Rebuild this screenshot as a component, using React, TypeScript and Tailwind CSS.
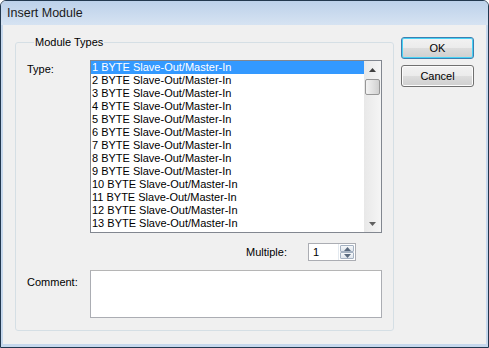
const items = Array.from({ length: 14 }, (_, i) => `${i + 1} BYTE Slave-Out/Master-In`);

const Arrow = ({ up, color = "#404040" }: { up?: boolean; color?: string }) => (
  <svg width="7" height="4" viewBox="0 0 7 4">
    <path d={up ? "M0 4 L3.5 0 L7 4 Z" : "M0 0 L7 0 L3.5 4 Z"} fill={color} />
  </svg>
);

const Button = ({ label, isDefault }: { label: string; isDefault?: boolean }) => (
  <div
    className={`flex h-[22px] w-[73px] items-center justify-center rounded-[3px] border ${
      isDefault ? "border-[#3c7fb1] shadow-[inset_0_0_0_1px_#48d2f5]" : "border-[#707070] shadow-[inset_0_0_0_1px_#fcfcfc]"
    } bg-[linear-gradient(to_bottom,#f2f2f2_0%,#ebebeb_50%,#dddddd_51%,#cfcfcf_100%)] text-black`}
  >
    {label}
  </div>
);

export default function App() {
  return (
    <div className="flex h-[348px] w-[489px] flex-col overflow-hidden rounded-t-[6px] border border-[#22384f] bg-[#f0f0f0] font-['Liberation_Sans',Arial,sans-serif] text-[11px] leading-[13px] text-black">
      <div className="flex h-[24px] shrink-0 items-center bg-[linear-gradient(to_bottom,#bcd1ea,#d6e3f2)] pl-[6px] text-[12.5px] text-[#1a1a1a]">
        Insert Module
      </div>
      <div className="flex flex-1 border-x-2 border-b-[3px] border-[#c6d8ed] pl-[12px]">
        <fieldset className="mt-[10px] h-[296px] w-[378px] rounded-[3px] border border-[#d5dfe5] px-[11px] pt-[11px]">
          <legend className="ml-[7px] px-[1px] leading-[14px]">Module Types</legend>
          <div className="flex">
            <div className="w-[63px] pt-[3px]">Type:</div>
            <div className="flex h-[173px] w-[292px] border border-[#828790] bg-white">
              <div className="flex-1 overflow-hidden">
                {items.map((t, i) => (
                  <div
                    key={t}
                    className={`h-[13px] pl-[1px] leading-[13px] whitespace-nowrap ${i === 0 ? "bg-[#3399ff] text-white" : ""}`}
                  >
                    {t}
                  </div>
                ))}
              </div>
              <div className="flex w-[17px] flex-col bg-[linear-gradient(to_right,#e8e8e8,#f5f5f5)]">
                <div className="flex h-[17px] items-center justify-center">
                  <Arrow up />
                </div>
                <div className="mx-[1px] mt-[1px] h-[16px] rounded-[2px] border border-[#979797] bg-[linear-gradient(to_right,#f3f3f3,#e2e2e2_50%,#d0d0d0)]" />
                <div className="flex-1" />
                <div className="flex h-[17px] items-center justify-center">
                  <Arrow color="#606060" />
                </div>
              </div>
            </div>
          </div>
          <div className="mt-[10px] flex items-center">
            <div className="ml-[219px] w-[62px]">Multiple:</div>
            <div className="flex h-[18px] w-[48px] border border-[#abadb3] bg-white">
              <div className="flex-1 pl-[4px] pt-[2px]">1</div>
              <div className="flex w-[17px] flex-col border-l border-[#e3e9ef] p-[1px]">
                <div className="flex flex-1 items-center justify-center rounded-[1px] border border-[#a5b2c2] bg-[linear-gradient(to_bottom,#f6f8fa,#dfe5ec)]">
                  <Arrow up color="#5a6a7e" />
                </div>
                <div className="flex flex-1 items-center justify-center rounded-[1px] border border-[#a5b2c2] bg-[linear-gradient(to_bottom,#f6f8fa,#dfe5ec)]">
                  <Arrow color="#5a6a7e" />
                </div>
              </div>
            </div>
          </div>
          <div className="mt-[9px] flex">
            <div className="w-[63px] pt-[6px]">Comment:</div>
            <div className="h-[48px] w-[292px] border border-[#abadb3] border-t-[#b5b5b5] bg-white" />
          </div>
        </fieldset>
        <div className="ml-[7px] mt-[12px] flex flex-col gap-[6px]">
          <Button label="OK" isDefault />
          <Button label="Cancel" />
        </div>
      </div>
    </div>
  );
}
